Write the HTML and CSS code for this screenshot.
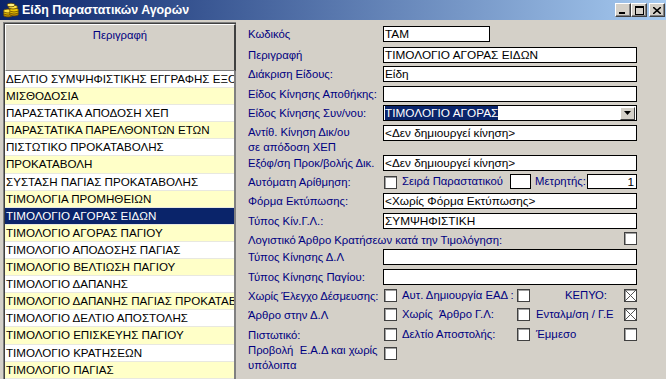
FILE: index.html
```html
<!DOCTYPE html>
<html lang="el">
<head>
  <meta charset="UTF-8">
  <title>Είδη Παραστατικών Αγορών</title>
  <link rel="stylesheet" href="styles.css">
</head>
<body>
  <div class="window">

    <div class="titlebar">
      <svg class="app-icon" width="16" height="16" viewBox="0 0 16 16">
        <ellipse cx="5" cy="13" rx="4.5" ry="2" fill="#c89400" stroke="#5a4000" stroke-width="0.8"/>
        <ellipse cx="5" cy="11" rx="4.5" ry="2" fill="#f0c800" stroke="#5a4000" stroke-width="0.8"/>
        <ellipse cx="5" cy="9" rx="4.5" ry="2" fill="#ffe040" stroke="#5a4000" stroke-width="0.8"/>
        <ellipse cx="11" cy="12" rx="4.5" ry="2" fill="#c89400" stroke="#5a4000" stroke-width="0.8"/>
        <ellipse cx="11" cy="10" rx="4.5" ry="2" fill="#f0c800" stroke="#5a4000" stroke-width="0.8"/>
        <ellipse cx="11" cy="8" rx="4.5" ry="2" fill="#f0c800" stroke="#5a4000" stroke-width="0.8"/>
        <ellipse cx="10" cy="5" rx="4.5" ry="2" fill="#ffe040" stroke="#5a4000" stroke-width="0.8"/>
        <ellipse cx="8" cy="3" rx="4" ry="1.8" fill="#fff080" stroke="#5a4000" stroke-width="0.8"/>
      </svg>
      <span class="title">Είδη Παραστατικών Αγορών</span>
      <div class="caption-buttons">
        <span class="cbtn"><svg width="8" height="7" viewBox="0 0 8 7"><rect x="0" y="5" width="6" height="2" fill="#000"/></svg></span>
        <span class="cbtn"><svg width="9" height="9" viewBox="0 0 9 9"><rect x="0.5" y="0.5" width="8" height="8" fill="none" stroke="#000"/><rect x="0" y="0" width="9" height="2" fill="#000"/></svg></span>
        <span class="cbtn close"><svg width="8" height="7" viewBox="0 0 8 7"><path d="M0 0 L8 7 M8 0 L0 7" stroke="#000" stroke-width="1.6"/></svg></span>
      </div>
    </div>

    <div class="content">

      <div class="list">
        <div class="list-head">Περιγραφή</div>
        <div class="rows">
          <div class="item">ΔΕΛΤΙΟ ΣΥΜΨΗΦΙΣΤΙΚΗΣ ΕΓΓΡΑΦΗΣ ΕΞΟΔΩΝ</div>
          <div class="item">ΜΙΣΘΟΔΟΣΙΑ</div>
          <div class="item">ΠΑΡΑΣΤΑΤΙΚΑ ΑΠΟΔΟΣΗ ΧΕΠ</div>
          <div class="item">ΠΑΡΑΣΤΑΤΙΚΑ ΠΑΡΕΛΘΟΝΤΩΝ ΕΤΩΝ</div>
          <div class="item">ΠΙΣΤΩΤΙΚΟ ΠΡΟΚΑΤΑΒΟΛΗΣ</div>
          <div class="item">ΠΡΟΚΑΤΑΒΟΛΗ</div>
          <div class="item">ΣΥΣΤΑΣΗ ΠΑΓΙΑΣ ΠΡΟΚΑΤΑΒΟΛΗΣ</div>
          <div class="item">ΤΙΜΟΛΟΓΙΑ ΠΡΟΜΗΘΕΙΩΝ</div>
          <div class="item selected">ΤΙΜΟΛΟΓΙΟ ΑΓΟΡΑΣ ΕΙΔΩΝ</div>
          <div class="item">ΤΙΜΟΛΟΓΙΟ ΑΓΟΡΑΣ ΠΑΓΙΟΥ</div>
          <div class="item">ΤΙΜΟΛΟΓΙΟ ΑΠΟΔΟΣΗΣ ΠΑΓΙΑΣ</div>
          <div class="item">ΤΙΜΟΛΟΓΙΟ ΒΕΛΤΙΩΣΗ ΠΑΓΙΟΥ</div>
          <div class="item">ΤΙΜΟΛΟΓΙΟ ΔΑΠΑΝΗΣ</div>
          <div class="item">ΤΙΜΟΛΟΓΙΟ ΔΑΠΑΝΗΣ ΠΑΓΙΑΣ ΠΡΟΚΑΤΑΒΟΛΗΣ</div>
          <div class="item">ΤΙΜΟΛΟΓΙΟ ΔΕΛΤΙΟ ΑΠΟΣΤΟΛΗΣ</div>
          <div class="item">ΤΙΜΟΛΟΓΙΟ ΕΠΙΣΚΕΥΗΣ ΠΑΓΙΟΥ</div>
          <div class="item">ΤΙΜΟΛΟΓΙΟ ΚΡΑΤΗΣΕΩΝ</div>
          <div class="item">ΤΙΜΟΛΟΓΙΟ ΠΑΓΙΑΣ</div>
          <div class="item">&nbsp;</div>
        </div>
      </div>

      <div class="form">
        <div class="row first">
          <span class="lbl">Κωδικός</span>
          <div class="box short">ΤΑΜ</div>
        </div>
        <div class="row">
          <span class="lbl">Περιγραφή</span>
          <div class="box">ΤΙΜΟΛΟΓΙΟ ΑΓΟΡΑΣ ΕΙΔΩΝ</div>
        </div>
        <div class="row">
          <span class="lbl">Διάκριση Είδους:</span>
          <div class="box">Είδη</div>
        </div>
        <div class="row">
          <span class="lbl">Είδος Κίνησης Αποθήκης:</span>
          <div class="box"></div>
        </div>
        <div class="row">
          <span class="lbl">Είδος Κίνησης Συν/νου:</span>
          <div class="box select">
            <span class="hl">ΤΙΜΟΛΟΓΙΟ ΑΓΟΡΑΣ</span>
            <span class="drop"><svg width="7" height="4" viewBox="0 0 7 4"><path d="M0 0 H7 L3.5 4 Z" fill="#000"/></svg></span>
          </div>
        </div>
        <div class="row tall">
          <span class="lbl two">Αντίθ. Κίνηση Δικ/ου<br>σε απόδοση ΧΕΠ</span>
          <div class="box">&lt;Δεν δημιουργεί κίνηση&gt;</div>
        </div>
        <div class="row">
          <span class="lbl">Εξόφ/ση Προκ/βολής Δικ.</span>
          <div class="box">&lt;Δεν δημιουργεί κίνηση&gt;</div>
        </div>
        <div class="row">
          <span class="lbl">Αυτόματη Αρίθμηση:</span>
          <div class="numbering">
            <span class="check"></span>
            <span class="sub">Σειρά Παραστατικού</span>
            <div class="box tiny"></div>
            <span class="sub">Μετρητής:</span>
            <div class="box num">1</div>
          </div>
        </div>
        <div class="row">
          <span class="lbl">Φόρμα Εκτύπωσης:</span>
          <div class="box">&lt;Χωρίς Φόρμα Εκτύπωσης&gt;</div>
        </div>
        <div class="row">
          <span class="lbl">Τύπος Κίν.Γ.Λ.:</span>
          <div class="box">ΣΥΜΨΗΦΙΣΤΙΚΗ</div>
        </div>
        <div class="row wide">
          <span class="lbl">Λογιστικό Άρθρο Κρατήσεων κατά την Τιμολόγηση:</span>
          <span class="check"></span>
        </div>
        <div class="row">
          <span class="lbl">Τύπος Κίνησης Δ.Λ</span>
          <div class="box"></div>
        </div>
        <div class="row">
          <span class="lbl">Τύπος Κίνησης Παγίου:</span>
          <div class="box"></div>
        </div>
        <div class="row">
          <span class="lbl tight">Χωρίς Έλεγχο Δέσμευσης:</span>
          <div class="checks">
            <span class="check"></span>
            <span class="sub">Αυτ. Δημιουργία ΕΑΔ :</span>
            <span class="check"></span>
            <span class="sub right">ΚΕΠΥΟ:</span>
            <span class="check"><svg width="11" height="11" viewBox="0 0 11 11"><path d="M0 0 L11 11 M11 0 L0 11" stroke="#555" stroke-width="1"/></svg></span>
          </div>
        </div>
        <div class="row">
          <span class="lbl">Άρθρο στην Δ.Λ</span>
          <div class="checks">
            <span class="check"></span>
            <span class="sub">Χωρίς &nbsp;Άρθρο Γ.Λ:</span>
            <span class="check"></span>
            <span class="sub">Ενταλμ/ση / Γ.Ε</span>
            <span class="check"><svg width="11" height="11" viewBox="0 0 11 11"><path d="M0 0 L11 11 M11 0 L0 11" stroke="#555" stroke-width="1"/></svg></span>
          </div>
        </div>
        <div class="row">
          <span class="lbl">Πιστωτικό:</span>
          <div class="checks">
            <span class="check"></span>
            <span class="sub">Δελτίο Αποστολής:</span>
            <span class="check"></span>
            <span class="sub">Έμμεσο</span>
            <span class="check"></span>
          </div>
        </div>
        <div class="row last">
          <span class="lbl two">Προβολή &nbsp;Ε.Α.Δ και χωρίς<br>υπόλοιπα</span>
          <div class="checks">
            <span class="check"></span>
          </div>
        </div>
      </div>

    </div>
  </div>
</body>
</html>
```

FILE: styles.css
```css
body {
  margin: 0;
  background-color: #d4d0c8;
  font-family: "Liberation Sans", Arial, sans-serif;
  font-size: 11.3px;
  overflow: hidden;
}

.window {
  width: 666px;
  height: 379px;
  display: flex;
  flex-direction: column;
}

/* title bar */
.titlebar {
  height: 20px;
  flex: none;
  display: flex;
  align-items: center;
  background: linear-gradient(to right, #0a246a, #a6caf0);
}

.app-icon {
  margin-left: 3px;
  flex: none;
}

.title {
  margin-left: 3px;
  color: #fff;
  font-weight: bold;
  font-size: 12.4px;
}

.caption-buttons {
  margin-left: auto;
  margin-right: 1px;
  display: flex;
}

.cbtn {
  width: 16px;
  height: 14px;
  box-sizing: border-box;
  background-color: #d4d0c8;
  border-top: 1px solid #fff;
  border-left: 1px solid #fff;
  border-right: 1px solid #404040;
  border-bottom: 1px solid #404040;
  box-shadow: inset -1px -1px #808080;
  display: flex;
  align-items: center;
  justify-content: center;
}

.cbtn.close {
  margin-left: 2px;
}

/* main area */
.content {
  flex: 1;
  display: flex;
  min-height: 0;
}

/* left grid */
.list {
  width: 231px;
  margin: 2px 0 0 3px;
  flex: none;
  border-top: 1px solid #808080;
  border-left: 1px solid #808080;
  box-shadow: inset 1px 1px #404040;
  padding: 1px 0 0 1px;
  display: flex;
  flex-direction: column;
  overflow: hidden;
}

.list-head {
  height: 47px;
  flex: none;
  box-sizing: border-box;
  background-color: #d4d0c8;
  border-top: 1px solid #fff;
  border-left: 1px solid #fff;
  border-right: 2px solid #404040;
  border-bottom: 1px solid #808080;
  color: #000080;
  text-align: center;
  padding-top: 4px;
}

.rows {
  border-right: 2px solid #808080;
  background-color: #fff;
}

.item {
  height: 17.1px;
  box-sizing: border-box;
  line-height: 16px;
  padding-left: 1px;
  white-space: nowrap;
  overflow: hidden;
  color: #000;
  font-family: "Liberation Sans Narrow", "Liberation Sans", sans-serif;
  font-size: 11.6px;
  border-bottom: 1px solid #e8e8e0;
  background-color: #fff;
}

.item:nth-child(even) {
  background-color: #ffffc8;
}

.item.selected {
  background-color: #0a246a;
  color: #fff;
}

/* right form */
.form {
  flex: 1;
  padding: 6px 0 0 12px;
}

.row {
  display: grid;
  grid-template-columns: 135px 254px;
  height: 19.4px;
  align-items: start;
}

.row.first { height: 21px; }
.row.tall { height: 30px; }
.row.wide {
  height: 17px;
  display: flex;
  width: 389px;
  justify-content: space-between;
}

.lbl {
  color: #000080;
  line-height: 16px;
  white-space: nowrap;
}

.lbl.tight {
  letter-spacing: -0.1px;
}

.lbl.two {
  line-height: 15px;
}

.row.last .lbl.two {
  margin-top: -3px;
}

.box {
  height: 16px;
  box-sizing: border-box;
  border: 1px solid #000;
  background-color: #fff;
  padding-left: 1px;
  line-height: 14px;
  white-space: nowrap;
  overflow: hidden;
  font-family: "Liberation Sans Narrow", "Liberation Sans", sans-serif;
  font-size: 11.8px;
}

.box.short { width: 107px; }

.box.select {
  display: flex;
  align-items: center;
  padding-right: 1px;
}

.box.select .hl {
  background-color: #0a246a;
  color: #fff;
  line-height: 14px;
}

.drop {
  margin-left: auto;
  width: 15px;
  height: 13px;
  box-sizing: border-box;
  background-color: #d4d0c8;
  border-top: 1px solid #fff;
  border-left: 1px solid #fff;
  border-right: 1px solid #404040;
  border-bottom: 1px solid #404040;
  display: flex;
  align-items: center;
  justify-content: center;
}

.check {
  width: 13px;
  height: 13px;
  box-sizing: border-box;
  border: 1px solid #404040;
  background-color: #fff;
  box-shadow: inset 1px 1px #a0a0a0;
  display: flex;
  align-items: center;
  justify-content: center;
}

.sub {
  color: #000080;
  white-space: nowrap;
  line-height: 15px;
}

.numbering {
  display: grid;
  grid-template-columns: 13px 113px 21px 56px 1fr;
  padding-left: 1px;
  align-items: start;
}

.numbering .check { margin-top: 2px; }
.numbering .sub:nth-child(2) { padding-left: 5px; }
.numbering .sub:nth-child(4) { padding-left: 4px; }
.box.tiny { height: 15px; }
.box.num {
  height: 15px;
  text-align: right;
  padding-right: 2px;
}

.checks {
  display: grid;
  grid-template-columns: 13px 120px 13px 94px 13px;
  padding-left: 1px;
  align-items: start;
}

.checks .check { margin-top: 1px; }
.checks .sub { padding-left: 5px; }
.checks .sub:nth-child(4) { padding-left: 6px; }
.checks .sub.right {
  text-align: right;
  padding-right: 17px;
}
```
